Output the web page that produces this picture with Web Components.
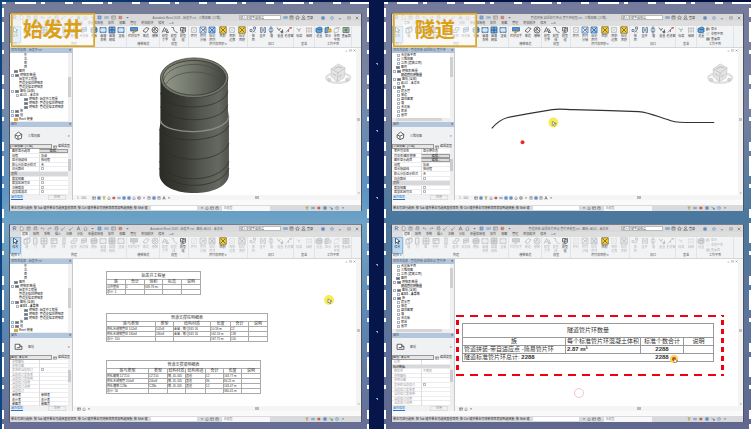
<!DOCTYPE html>
<html lang="zh-CN">
<head>
<meta charset="utf-8">
<title>始发井与隧道</title>
<style>
html,body{margin:0}
body{font-family:"Liberation Sans","Noto Sans CJK SC",sans-serif;font-size:3px;line-height:4px;color:#333;min-height:100vh;background:#06154a}
</style>
</head>
<body>
<star-desk>
  <dashed-panel tone="blue">
    <model-window doc="Autodesk Revit 2018 - 始发井.rvt - 三维视图: {三维}" kind="view" tree="shaft" props="shaft3d" label="始发井">
      <shaft-scene></shaft-scene>
    </model-window>
    <model-window doc="Autodesk Revit 2018 - 始发井.rvt - 图纸: A101 - 未命名" kind="sheet" tree="shaft" props="shaftSheet">
      <shaft-schedules></shaft-schedules>
    </model-window>
  </dashed-panel>
  <dashed-panel tone="navy">
    <model-window doc="管道拼装-自适应片环点-管片环模型.rvt - 三维视图: {三维}" kind="view" tree="tunnel" props="tunnel3d" label="隧道" compact>
      <tunnel-scene></tunnel-scene>
    </model-window>
    <model-window doc="管道拼装-自适应片环点-管片环模型.rvt - 图纸: A101 - 未命名" kind="sheet" tree="tunnel" props="tunnelSheet" compact>
      <tunnel-schedule></tunnel-schedule>
    </model-window>
  </dashed-panel>
</star-desk>
<script>
const reset = `*{box-sizing:border-box}button,input,select{font:inherit;color:inherit;margin:0;padding:0;border:0;background:none;border-radius:0;min-width:0;min-height:0;appearance:none;outline:0}svg{display:block}`;
const define = (name, css, html) => customElements.define(name, class extends HTMLElement {
  connectedCallback() {
    if (this.shadowRoot) return;
    const root = this.attachShadow({mode: 'open'});
    root.innerHTML = `<style>${reset}${css}</style>` + (typeof html === 'function' ? html(this) : html);
  }
});

/* 16-unit glyphs */
const S = (body, w = 8) => `<svg width="${w}" height="${w}" viewBox="0 0 16 16" fill="none" stroke="#555" stroke-width="1.6" aria-hidden="true">${body}</svg>`;
const G = {
  cursor:'<path d="M5 2v11l3-3 2 4 2-1-2-4h4z" fill="#fff" stroke="#345"/>',
  wall:'<path d="M2 5l6-3h6v8l-6 4H2z" fill="#e4e8ec"/><path d="M2 5h6v9M8 5l6-3"/>',
  door:'<path d="M5 2h7v12H5z" fill="#dde3e8"/><path d="M10 8v1"/>',
  window:'<path d="M2 2h12v12H2z" fill="#cddbe8"/><path d="M2 8h12M8 2v12"/>',
  column:'<path d="M5 2h6M6 2v12M10 2v12M5 14h6"/>',
  roof:'<path d="M2 8h5V3h7v5h-4v5H2z" fill="#d8e4ee" stroke="#678"/>',
  ceil:'<path d="M3 4l10-2v8L3 13z" fill="#9fc3e6" stroke="#4b7eb0"/><path d="M3 8l10-2"/>',
  floor:'<path d="M2 4l9-2 3 2v8l-9 2-3-2z" fill="#6fa8dc" stroke="#315f90"/><path d="M2 8l12-1"/>',
  curtain:'<path d="M2 3h12v10H2z" fill="#8cb9e2" stroke="#42719f"/><path d="M2 8h12M6 3v10M10 3v10" stroke="#fff"/>',
  mull:'<path d="M2 2h12v12H2z" fill="#77ace0" stroke="#315f90"/><path d="M8 2v12M2 8h12" stroke="#1d4f86"/>',
  rail:'<path d="M1 3h14v7H1z" fill="#4f93d2" stroke="#3a6c9c"/><path d="M5 14l5-6 2 2-5 4z" fill="#f0b34a" stroke="#b87a20"/>',
  ramp:'<path d="M2 10l6-7 6 2-6 8z" fill="#f2f2f2"/>',
  stair:'<circle cx="8" cy="8" r="6"/><path d="M3 6l7 7M5 3l8 8M4 11l7-8"/>',
  text:'<path d="M2 13L7 3l5 10M4 10h6M11 5l4 8h-5"/>',
  line:'<path d="M3 3h4c0 6 2 9 8 10"/>',
  group:'<path d="M3 3h7v7H3z"/><path d="M6 6l7-3v8l-5 3zM3 14h4"/>',
  roomoff:'<path d="M3 3h10v10H3z" stroke="#bbb"/><path d="M4 4l8 8M12 4l-8 8" stroke="#ccc"/>',
  room:'<path d="M2 2h12v12H2z" fill="#e5eef7" stroke="#3b77b8"/><path d="M3 3l10 10M13 3L3 13" stroke="#3b77b8"/><path d="M10 3l4 4-4 2z" fill="#e8762b" stroke="none"/>',
  tag:'<path d="M2 2h12v12H2z" fill="#b9d2ee" stroke="#316ba8"/><path d="M3 3l10 10M13 3L3 13" stroke="#28578c"/><path d="M9 9h5v5H9z" fill="#4a90d9" stroke="none"/>',
  area:'<path d="M1.500 1.500h13v13h-13z" fill="#f8cf32" stroke="#7c7045"/><path d="M3 3l10 10M13 3L3 13" stroke="#725d19"/>',
  shaft:'<path d="M9 2h4v4H9zM2 7h4v4H2zM7 13l6-6" stroke="#58708c"/><path d="M9 10l4 3" stroke="#c76"/>',
  open:'<path d="M3 3h3v10H3zM10 3h3v10h-3zM6 8h4" stroke="#5f7895"/>',
  vert:'<path d="M8 1l3 4H5zM8 15l3-4H5zM3 8h10" stroke="#54769c"/>',
  dorm:'<path d="M2 3l4 6 3-5M9 11h4V7"/><circle cx="12" cy="12" r="2" fill="#5b90c4"/>',
  level:'<path d="M2 13l5-6 6-4M7 7v5" stroke="#766"/><path d="M9 2h5v3H9z" fill="#e76b5d" stroke="none"/>',
  dot:'<path d="M3 5l5 3 4-3M8 8v4" stroke="#999"/>',
  grid:'<path d="M3 2v12M8 2v12M13 2v12M2 5h12M2 10h12" stroke="#bbb"/>',
  set:'<path d="M2 5l8-3 4 2v8l-8 2-4-2z" fill="#5ba3dc" stroke="#28679f"/><path d="M5 7h8"/>',
  show:'<path d="M2 4l7-2v10l-7 2z" fill="#69a6d9" stroke="#336a9c"/><path d="M8 6h6v6H8z" fill="#f4c554" stroke="#b18836"/>',
  ref:'<path d="M3 5h9l-3 8H2zM5 3h9" stroke="#bbb"/>',
  viewer:'<path d="M2 3h12v10H2z" fill="#b7c1b7" stroke="#667"/><path d="M5 5h6v6H5z" fill="#54954e" stroke="none"/>',
  doc:'<path d="M4 2h6l3 3v9H4z" fill="#eee"/>', save:'<path d="M3 3h10v10H3zM6 3v4h4V3"/>',
  undo:'<path d="M3 7h7c4 0 4 5 1 6M6 4L3 7l3 3"/>', redo:'<path d="M13 7H6c-4 0-4 5-1 6M10 4l3 3-3 3"/>',
  print:'<path d="M3 6h10v6H3zM5 6V2h6v4"/>', dim:'<path d="M2 13L13 3M2 9v4h4"/>', A:'<path d="M3 14L8 2l5 12M5 10h6" stroke-width="2.400"/>',
  house:'<path d="M2 8l6-5 6 5M4 8v6h8V8"/>', box:'<path d="M3 3h10v10H3z" fill="#6e9fd8" stroke="#27599a"/>',
  R:'<path d="M4 14V2h5c5 0 5 6 0 6H4M8 8l5 6" stroke="#27599a" stroke-width="2.600"/>',
  star:'<path d="M8 2l2 4 4 1-3 3 1 4-4-2-4 2 1-4-3-3 4-1z"/>', user:'<circle cx="8" cy="5" r="3"/><path d="M2 14c1-6 11-6 12 0z"/>',
  help:'<circle cx="8" cy="8" r="6" stroke="#467db8"/><path d="M6 6c1-3 5-1 2 2v1M8 11v1" stroke="#467db8"/>', x:'<path d="M3 3l10 10M13 3L3 13" stroke-width="2.200"/>',
  min:'<path d="M3 11h9" stroke-width="2.200"/>', max:'<path d="M3 3h10v9H3z"/>', caret:'<path d="M4 6h8l-4 5z" fill="#555" stroke="none"/>',
  red:'<path d="M3 4h9v8H3z" fill="#e06a50" stroke="#a43"/>', gold:'<path d="M3 3h10l-4 5v6H7V8z" fill="#eab53a" stroke="#8a9440"/>',
  link:'<path d="M2 5h5v6H2zM9 5h5v6H9zM5 8h6" stroke="#4a86bd"/>', sheet:'<path d="M2 3h12v10H2zM2 6h12M6 6v7" fill="#eee"/>'
};

define('star-desk', `:host{display:grid;grid-template-columns:1fr 1fr;grid-template-rows:minmax(0,1fr);gap:15px;padding:2px 0 0 2px;height:100vh;box-sizing:border-box;
 background:
 radial-gradient(circle,#6fa4d0 0 1px,transparent 1px) 4px 30px/83px 67px,
 radial-gradient(circle,#2d5596 0 1px,transparent 1px) 9px 12px/23px 43px,
 linear-gradient(90deg,#0f4680 0,#06154a 50%,#020f3f 100%)}`, '<slot></slot>');

define('dashed-panel', `:host{display:grid;grid-template-rows:minmax(0,1fr) minmax(0,1fr);gap:13px;padding:11px 7px 7px;min-width:0;min-height:0;box-sizing:border-box;
 --h:linear-gradient(90deg,#fff 0 8px,transparent 8px 17px,#fff 17px 38px,transparent 38px 43px,#fff 43px 47px,transparent 47px);
 --v:linear-gradient(#fff 0 9px,transparent 9px 14px,#fff 14px 34px,transparent 34px 42px,#fff 42px 46px,transparent 46px);
 --s:radial-gradient(circle,#b5cfe4 0 1px,transparent 1px)}
 :host([tone=blue]){background:var(--h) 63px 0/67px 2px repeat-x,var(--v) 0 6px/2px 67px repeat-y,var(--v) 100% 6px/2px 67px repeat-y,var(--s) 4px 5px/53px 71px,
 linear-gradient(180deg,#747b99 0,#7885a4 20%,#5b94c4 44%,#70a4c6 52%,#5c86b2 75%,#686d94 100%)}
 :host([tone=navy]){background:var(--h) 63px 0/67px 2px repeat-x,var(--v) 0 6px/2px 67px repeat-y,var(--v) 100% 6px/2px 67px repeat-y,var(--s) 4px 5px/53px 71px,
 linear-gradient(180deg,#747a9c 0,#7580a0 25%,#4b789e 50%,#5d749c 75%,#61678e 100%)}
 ::slotted(*){min-width:0;min-height:0}`, '<slot></slot>');

define('title-bar', `:host{display:flex;align-items:center;height:7px;background:#d9d9dc;white-space:nowrap;padding:0 2px}
 .q{display:flex;gap:1px;flex:0 0 122px;justify-content:space-between;padding-right:4px}
 .q svg{opacity:.75} .t{flex:1;text-align:center;color:#666}
 input{width:42px;height:5px;background:#fff;border:1px solid #bbb;color:#555;line-height:3px}
 .r{display:flex;gap:1px;align-items:center;padding-left:2px;flex:0 0 40px} .w{display:flex;justify-content:space-between;flex:0 0 38px}
 button{display:block;height:5px}`,
 el => `<div class="q">${['R','doc','save','print','undo','redo','print','dim','dim','A','house','caret','box','link','sheet','red','caret'].map(k=>S(G[k],5)).join('')}</div>
 <div class="t">${el.getAttribute('doc')}</div>
 <input aria-label="搜索" value="键入关键字或短语">
 <div class="r">${['link','save','star','user'].map(k=>S(G[k],5)).join('')}<span>登录</span></div>
 <div class="w">${['box','help','min','max','x'].map(k=>`<button aria-label="${k}">${S(G[k],4)}</button>`).join('')}</div>`);

define('tab-bar', `:host{display:flex;height:5px;background:#dededf;padding:0 11px;align-items:center;white-space:nowrap}
 nav{display:flex;gap:3px} button{height:5px;line-height:5px;padding:0 1px;color:#444} button:first-child{background:#f4f5f6}`,
 `<nav>${['建筑','结构','系统','插入','注释','分析','体量和场地','协作','视图','管理','附加模块','修改','▭▾'].map(t=>`<button>${t}</button>`).join('')}</nav>`);

const groups = [
 ['选择 ▾',11,[['cursor','修改',11,1]]],
 ['构建',107,[['wall','墙',10],['door','门',8],['window','窗',9],['sheet','构件',11],['column','柱',10],['roof','屋顶',10],['ceil','天花板',11],['floor','楼板',10],['curtain','幕墙<br>系统',9],['mull','幕墙<br>网格',9],['curtain','竖梃',10]]],
 ['楼梯坡道',33,[['rail','栏杆扶手',14],['ramp','坡道',10],['stair','楼梯',9]]],
 ['模型',28,[['text','模型<br>文字',9],['line','模型<br>线',9],['group','模型<br>组',10,1]]],
 ['房间和面积 ▾',60,[['roomoff','房间',10],['room','房间<br>分隔',9],['tag','标记<br>房间',10],['area','面积',11,1],['roomoff','面积<br>边界',9],['area','标记<br>面积',11]]],
 ['洞口',46,[['shaft','按<br>面',10],['open','竖井',9],['vert','墙',9],['dorm','垂直',9],['level','老虎窗',9]]],
 ['基准',20,[['dot','标高',10],['grid','轴网',10]]],
 ['工作平面',37,[['set','设置',9],['show','显示',9],['ref','参照<br>平面',9],['viewer','查看器',10]]]
];
define('tool-ribbon', `:host{display:flex;height:22px;background:#f2f3f5;border-bottom:1px solid #d3d5d8;padding-right:9px}
 section{display:grid;grid-template-rows:1fr 4px;border-right:1px solid #e2e3e5;min-width:0}
 .b{display:flex;min-width:0} h6{margin:0;font-weight:400;text-align:center;line-height:3px;white-space:nowrap;color:#555;font-size:3px}
 button{display:flex;flex-direction:column;align-items:center;line-height:4px;color:#444;white-space:nowrap}
 button.sel{background:#bcd9f2;outline:1px solid #8fb8de;outline-offset:-1px}
 :host([kind=sheet]) button:not(.on){opacity:.35;filter:grayscale(1)}
 .list{flex-direction:column;gap:1px;padding-top:1px} .list button{flex-direction:row;gap:1px}`,
 el => groups.map(([n,w,bs],gi)=>{
  const compact = el.hasAttribute('compact') && gi===7;
  const btn = ([k,t,bw,on],sz=8)=>`<button class="${on?'on':''} ${k==='cursor'?'sel':''}" style="flex:${sz===8?bw+' 0 0':'none'}">${S(G[k],sz)}<span>${t}</span></button>`;
  return `<section style="flex:${w} 0 0"><div class="b">${compact? btn(bs[0]).replace('9 0 0','0 0 9px')+`<div class="b list">${bs.slice(1).map(b=>btn([b[0],b[1].replace('<br>',''),0],4)).join('')}</div>`:bs.map(b=>btn(b)).join('')}</div><h6>${n}</h6></section>`;}).join(''));

const bar = t => `<div class="bar"><span>${t}</span><b>×</b></div>`;
const barCss = `.bar{display:flex;justify-content:space-between;height:5px;line-height:5px;background:#b4c6dc;color:#4e5e70;padding:0 1px;white-space:nowrap}.bar b{color:#222}`;
/* rows: [indent, marker, label, style] */
const trees = {
 shaft:[[14,'','东'],[14,'','北'],[14,'','南'],[14,'','西'],[4,'s','图例'],[1,'ms','明细表/数量'],[9,'','始发井工程量'],[9,'','管道支撑柱明细表'],[9,'','管道支撑梁明细表'],[1,'ms','图纸 (全部)'],[6,'m','A101 - 未命名','cur'],[14,'s','明细表: 始发井工程量'],[14,'s','明细表: 管道支撑柱明细表'],[14,'s','明细表: 管道支撑梁明细表'],[1,'ms','族'],[1,'ms','组'],[4,'g','Revit 链接']],
 tunnel:[[5,'m','天花板平面'],[5,'m','三维视图'],[5,'m','立面 (建筑立面)'],[4,'s','图例'],[1,'ms','明细表/数量'],[9,'','隧道管片环数量','hl'],[1,'ms','图纸 (全部)'],[5,'m','A101 - 未命名','cur'],[1,'ms','族'],[5,'m','喷水管'],[5,'m','坡道'],[5,'m','填充图案'],[5,'m','墙'],[5,'m','天花板'],[5,'m','家具'],[5,'m','屋顶']]
};
define('project-browser', `:host{display:block;background:#fff}${barCss}
 .in{display:grid;grid-template-columns:1fr 4px;height:68px} ul{list-style:none;margin:0;padding:0;color:#222}
 li{display:flex;gap:1px;height:4px;line-height:4px;white-space:nowrap;align-items:center}
 i{width:3px;height:3px;flex:none;border:1px solid #a9b3bd} i.s{background:#667;border-color:#8794a3;width:4px} i.g{background:#e0a73c;border-color:#e0a73c;width:4px}
 .hl span{background:#ddd} .bold.cur span{font-weight:700}
 .sb{background:#f1f1f1;padding-top:4px} .sb:before{content:"";display:block;width:3px;height:20px;background:#cfcfd2} .low .sb{padding-top:24px}
 .hs{height:3px;background:#eee;margin-top:-3px;padding:0 4px} .hs:before{content:"";display:block;width:46px;height:3px;background:#d5d5d7}`,
 el => { const k=el.getAttribute('tree'), sheet=el.getAttribute('kind')==='sheet';
 return bar('项目浏览器 - '+(k==='shaft'?'始发井.rvt':'管道拼装-自适应点-管片环'))+`<div class="in ${k==='shaft'?'low':''}"><ul>${trees[k].map(([p,m,t,c])=>`<li class="${c||''} ${sheet?'bold':''}" style="padding-left:${p}px">${[...m].map(x=>`<i class="${x}"></i>`).join('')}<span>${t}</span></li>`).join('')}</ul><div class="sb"></div></div>${k==='tunnel'?'<div class="hs"></div>':''}`;});

const E='[e]',C='[c]';
const propData = {
 shaft3d:{rows:[['图形显示选项',E],['规程','协调'],['显示隐藏线','按规程'],['默认分析显示样式','无'],['日光路径',C],['范围'],['裁剪视图',C],['裁剪区域可见',C],['注释裁剪',C],['远剪裁激活',C]]},
 tunnel3d:{rows:[['零件可见性','显示原状态'],['可见性/图形替换',E],['图形显示选项',E],['规程','协调'],['显示隐藏线','按规程'],['默认分析显示样式','无'],['日光路径',C],['范围'],['裁剪视图',C],['裁剪区域可见',C]]},
 shaftSheet:{grey:8,rows:[['参照图纸',''],['参照详图',''],['发布的当前修订',C],['当前修订发布者',''],['当前修订发布到',''],['当前修订日期',''],['当前修订说明',''],['当前修订',''],['审核者','审核者'],['设计者','设计者'],['审图员','审图员']]},
 tunnelSheet:{grey:99,rows:[['比例',''],['标识数据'],['相关性','不相关'],['参照图纸',''],['参照详图',''],['发布的当前修订',C],['当前修订发布者',''],['当前修订发布到',''],['当前修订日期',''],['当前修订说明','']]}
};
define('property-palette', `:host{display:flex;flex-direction:column;background:#f0f1f2;min-height:0}${barCss}.bar{flex:none}
 .type{display:flex;align-items:center;gap:5px;padding:0 2px 0 4px;height:17px;flex:none;color:#555} .type span{flex:1}
 .pick{display:flex;height:5px;gap:1px;flex:none;line-height:5px;white-space:nowrap;align-items:center} select{flex:0 0 42px;height:5px;line-height:3px;border:1px solid #999;background:#e6e6e6;color:#222}
 .scroll{display:grid;grid-template-columns:1fr 4px;grid-template-rows:minmax(0,1fr);flex:1;min-height:0} .sb{background:#eee;padding-top:10px} .sb:before{content:"";display:block;width:3px;height:12px;background:#cbcbcf}
 .rows{display:grid;grid-auto-rows:minmax(0,1fr);background:#fff;min-height:0}
 .row{display:grid;grid-template-columns:27px 1fr;box-shadow:inset 0 -1px #ececee;line-height:4px;white-space:nowrap;color:#222;min-height:0;padding-left:2px}
 .row>:last-child{border-left:1px solid #ddd;padding-left:1px}
 .row.cat{background:#d7d8da;display:block;padding-left:1px} .row.grey{color:#999}
 .row button{background:#ddd;border:1px solid #999;line-height:2px;height:4px;text-align:center}
 input{width:3px;height:3px;border:1px solid #bbb;display:block}
 .foot{display:flex;justify-content:space-between;height:5px;flex:none;padding:0 6px 0 1px;line-height:5px} a{color:#2471c8} .foot button{color:#999;border:1px solid #ddd;width:18px;height:5px;line-height:3px}`,
 el => {const k=el.getAttribute('props'),d=propData[k],sheet=k.endsWith('Sheet');
 return bar('属性')+`<div class="type">${sheet?S('<path d="M2 4h8l4 4v5H2z" fill="#fff"/><path d="M10 4v4h4M5 10h6"/>',9):S('<path d="M2 7l6-5 6 4-1 7-6 2-5-3z" fill="#fff"/><path d="M2 7l5 2 7-3M7 9v6"/>',9)}<span>${sheet?'图纸':'三维视图'}</span>▾</div>
 <div class="pick"><select aria-label="类型"><option>${sheet?'图纸: 未命名':'三维视图: {三维}'}</option></select>${S(G.sheet,4)}<span>编辑类型</span></div>
 <div class="scroll"><div class="rows">${d.rows.map((r,i)=>r.length<2?`<div class="row cat">${r[0]}</div>`:`<div class="row ${i<(d.grey||0)?'grey':''}"><label for="p${i}">${r[0]}</label>${r[1]===E?`<button id="p${i}">编辑...</button>`:r[1]===C?`<div><input id="p${i}" type="checkbox"></div>`:`<output id="p${i}">${r[1]}</output>`}</div>`).join('')}</div><div class="sb"></div></div>
 <div class="foot"><a href="#help">属性帮助</a><button>应用</button></div>`;});

define('view-bar', `:host{display:flex;align-items:center;height:5px;background:#f5f5f6;padding:0 4px;gap:2px;color:#777} .v{flex:0 0 176px;display:flex;gap:1px;align-items:center}.v span{margin-right:5px;white-space:nowrap}.th{width:4px;height:3px;background:#bbb}`,
 el => `<div class="v">${el.getAttribute('kind')==='view'?'<span>1 : 100</span>'+['sheet','box','gold','house','red','link','box','box','house','stair','caret','save','box','save','A','caret'].map(k=>S(G[k],4)).join(''):['sheet','house','caret'].map(k=>S(G[k],4)).join('')}</div><div class="th"></div>`);

define('status-bar', `:host{display:flex;align-items:center;height:6px;background:#d9dadb;white-space:nowrap;color:#222;gap:3px}
 p{margin:0;flex:0 0 136px;padding-left:1px;line-height:6px} .f{flex:0 0 46px;height:4px;background:#fff} select{flex:0 0 48px;height:5px;line-height:5px;background:#f8f8f8;color:#888;padding-left:2px}
 .i{display:flex;gap:1px} .e{margin-left:auto;gap:2px;margin-right:16px}`,
 `<p>单击可进行选择; 按 Tab 键并单击可选择其他项目; 按 Ctrl 键并单击可将新项目添加到选择集; 按 Shift 键</p><div class="f"></div><div class="i">${['caret','house','sheet','save'].map(k=>S(G[k],4)).join('')}</div>
 <select aria-label="设计选项"><option>主模型</option></select><div class="i e">${['gold','link','red','box','dorm','help','caret'].map(k=>S(G[k],4)).join('')}</div>`);

define('name-badge', `:host{display:grid;place-items:center;height:34px;border:1px solid #dca51f;outline:1px solid #e6bd57;outline-offset:-2px;background:rgba(255,255,255,.6);color:#dba013;font-size:20px;line-height:30px;font-weight:700;box-sizing:border-box}`,'<slot></slot>');

define('model-window', `:host{display:flex;flex-direction:column;position:relative;background:#fafafa;border-left:1px solid #4e5460;border-right:1px solid #4e5460;border-top:1px solid #777d8b;min-width:0;box-sizing:border-box}
 .main{flex:1;display:grid;grid-template-columns:63px 1fr;grid-template-rows:minmax(0,1fr);min-height:0}
 .side{display:flex;flex-direction:column;gap:1px;border-right:1px solid #c5c9ce;min-height:0;background:#eee} project-browser{flex:none} property-palette{flex:1}
 .view{display:grid;grid-template-rows:minmax(0,1fr) 5px;min-width:0;min-height:0} .canvas{display:grid;grid-template-columns:1fr 5px;grid-template-rows:minmax(0,1fr);background:#fff;min-height:0}
 .vs{background:#f4f4f5;display:flex;flex-direction:column;justify-content:space-between;align-items:center;color:#888} .vs i{width:3px;height:3px;background:#c3c3c6}
 .ctl{position:absolute;right:5px;top:35px;display:flex;gap:1px} .gap{height:5px;background:#fafafa;flex:none} status-bar,title-bar,tab-bar,tool-ribbon{flex:none}
 name-badge{position:absolute;left:1px;top:-1px;width:84px}`,
 el => {const a=n=>el.getAttribute(n)||'',k=a('kind'),c=el.hasAttribute('compact')?'compact':'';
 return `<title-bar doc="${a('doc')}"></title-bar><tab-bar></tab-bar><tool-ribbon kind="${k}" ${c}></tool-ribbon>
 <div class="main"><div class="side"><project-browser tree="${a('tree')}" kind="${k}"></project-browser><property-palette props="${a('props')}"></property-palette></div>
 <div class="view"><div class="canvas"><slot></slot><div class="vs"><span></span><i></i><span>▾</span></div></div><view-bar kind="${k}"></view-bar></div></div>
 <div class="gap"></div><status-bar></status-bar><div class="ctl">${['min','max','x'].map(k=>`<button aria-label="视图 ${k}">${S(G[k],3)}</button>`).join('')}</div>${a('label')?`<name-badge>${a('label')}</name-badge>`:''}`;});

const sceneCss = `:host{display:block;min-width:0;min-height:0}svg{width:100%;height:100%}`;
const cube = `<g transform="translate(267 26)"><ellipse cy="4" rx="12" ry="5" fill="none" stroke="#e2e2e2" stroke-width="2.500"/><path d="M-7-5L0-10 7-6 6 4-1 8-7 3z" fill="#e2e3e5" stroke="#bbb" stroke-width=".5"/><path d="M-7-5L0-1 7-6M0-1L-1 8" fill="none" stroke="#aaa" stroke-width=".5"/><path d="M-4-5L0-7 4-6M-5 0l3 2M1 3l3-2" fill="none" stroke="#bbb"/><circle cx="-9" cy="6" r="1.500" fill="#ddd" stroke="#aaa" stroke-width=".5"/><circle cx="9" cy="6" r="1.500" fill="#ddd" stroke="#aaa" stroke-width=".5"/></g>`;
define('shaft-scene', sceneCss, `<svg viewBox="0 0 283 148" preserveAspectRatio="xMinYMin meet" role="img" aria-label="始发井三维模型">
 <defs><linearGradient id="o"><stop offset="0" stop-color="#2b2c27"/><stop offset=".35" stop-color="#3b3d36"/><stop offset=".6" stop-color="#54574e"/><stop offset=".85" stop-color="#656860"/><stop offset="1" stop-color="#50534a"/></linearGradient>
 <linearGradient id="n"><stop offset="0" stop-color="#929788"/><stop offset=".4" stop-color="#777c70"/><stop offset="1" stop-color="#42453d"/></linearGradient></defs>
 <path d="M88 31V75L87 82V128C90 152 154 152 157 128V70L156 63V31z" fill="url(#o)"/>
 <ellipse cx="122" cy="30" rx="34" ry="20" fill="#73776c" stroke="#30322d" stroke-width=".7"/>
 <ellipse cx="122" cy="30" rx="31.500" ry="17.500" fill="url(#n)" stroke="#34362f" stroke-width=".8"/>
 <path d="M91 33C96 11 148 11 153 33M93 37C102 20 143 20 151 37" fill="none" stroke="#484b43" stroke-width=".7"/>
 <path d="M88 73C92 89 154 88 157 69" fill="none" stroke="#8b8f83" stroke-width="1.300"/>
 <g fill="none" stroke="#2b2d28" stroke-width=".7"><path d="M88 45C93 65 152 64 156 43M88 59C95 77 151 77 156 57M87 82C95 97 149 96 157 78M87 96C95 118 149 117 157 96M87 114C95 138 149 137 157 114M87 121C95 144 149 144 157 121"/></g>
 ${cube}</svg>`);
const pointer = (x,y,r=5)=>`<g transform="translate(${x} ${y})"><circle r="${r}" fill="#f5ec57"/><path d="M-1-1v4l1-1 1 2 1-1-1-2h2z" fill="#fff" stroke="#665" stroke-width=".6"/></g>`;
define('tunnel-scene', sceneCss, `<svg viewBox="0 0 283 148" preserveAspectRatio="xMinYMin meet" role="img" aria-label="隧道三维路径">
 <path d="M37 81C42 75 46 72 53 70L74 66 98 62C105 61 112 62 119 62L156 63 185 64C196 65 204 69 214 72 220 75 225 75 232 75L261 75" fill="none" stroke="#333" stroke-width="1.200"/>
 ${pointer(99,75)}<circle cx="68" cy="95" r="2" fill="#ee2a2a"/>${cube}</svg>`);

const table = (title, cols, head, rows) => `<table><colgroup>${cols.map(c=>`<col style="width:${c}px">`).join('')}</colgroup><thead><tr class="t"><th colspan="${cols.length}">${title}</th></tr><tr>${head.map(h=>`<th>${h}</th>`).join('')}</tr></thead><tbody>${rows.map(r=>`<tr>${r.map(c=>`<td>${c}</td>`).join('')}</tr>`).join('')}</tbody></table>`;
define('shaft-schedules', `:host{display:flex;flex-direction:column;align-items:flex-start;gap:18px;padding:12px 0 0 33px;font-size:4px;position:relative;min-height:0;box-sizing:border-box}
 table{border-collapse:collapse;table-layout:fixed;width:min-content;color:#333} th,td{border:1px solid #aaa;padding:0;font-weight:400;height:5px;line-height:4px;white-space:nowrap;text-align:left} th{text-align:center} td{font-size:3px} .t th{height:8px;line-height:7px}
 .m{position:absolute;left:251px;top:36px}`,
 table('始发井工程量',[19,19,18,19,19],['族','合计','体积','标高','说明'],[['沉井壁体','1','949.78 m³','',''],['总计: 1','','','','']])+
 table('管道支撑柱明细表',[49,18,37,20,18,19],['族与类型','类型','结构材质','长度','合计','说明'],[['热轧无缝钢管柱 102x8','102x8','金属 - 钢 Q345 16','10.59 m','12',''],['热轧无缝钢管柱 180x8','180x8','金属 - 钢 Q345 16','162.16 m','138',''],['总计: 150','','','167.75 m','150','']])+
 table('管道支撑梁明细表',[42,19,18,20,18,18,19],['族与类型','类型','结构材质','结构用途','合计','长度','说明'],[['热轧扁钢 12*210','12*210','钢, 45-345','其他','12','163.77 m',''],['热轧无缝钢管 200x8','200x8','钢, 45-345','其他','36','84.21 m',''],['热轧槽钢 C28b','C28b','钢, 45-345','其他','12','163.47 m',''],['总计: 56','','','','','360.41 m','']])+
 `<svg class="m" width="10" height="10" viewBox="-5 -5 10 10" aria-hidden="true">${pointer(0,0)}</svg>`);

define('tunnel-schedule', `:host{display:block;padding:56px 14px 0 1px;font-size:6px;position:relative;min-width:0;min-height:0;box-sizing:border-box}
 .box{--h:linear-gradient(90deg,#f00011 0 8px,transparent 8px);--v:linear-gradient(#f00011 0 5px,transparent 5px);padding:8px 10px 14px 6px;background:var(--h) 0 0/14px 2px repeat-x,var(--h) 0 100%/14px 2px repeat-x,var(--v) 0 5px/3px 9px repeat-y,var(--v) 100% 5px/3px 9px repeat-y}
 table{border-collapse:collapse;table-layout:fixed;width:100%;color:#333} th,td{border:1px solid #999;padding:0 1px;font-weight:400;height:8px;line-height:7px;white-space:nowrap;text-align:left} th{padding:0} th,.c{text-align:center} .t th{height:14px}
 b{font-weight:700} .l{border-right:0} .r{border-left:0}
 .m{position:absolute;left:214px;top:95px}.ring{position:absolute;left:119px;top:129px;width:10px;height:10px;border:1px solid #f6c2c8;border-radius:50%}`,
 `<div class="box"><table><colgroup><col style="width:41%"><col style="width:30%"><col style="width:17%"><col></colgroup><thead><tr class="t"><th colspan="4">隧道管片环数量</th></tr><tr><th>族</th><th>每个标准管片环混凝土体积</th><th>标准个数合计</th><th>说明</th></tr></thead>
 <tbody><tr><td>管道拼装-带自适应点 -简易管片环</td><td><b>2.87 m³</b></td><td class="c"><b>2288</b></td><td></td></tr><tr><td colspan="2" class="l">隧道标准管片环总计: <b>2288</b></td><td class="c l r"><b>2288</b></td><td class="r"></td></tr></tbody></table></div>
 <svg class="m" width="10" height="10" viewBox="-5 -5 10 10" aria-hidden="true"><circle r="4" fill="#f7d64b"/><circle r="2" fill="#e83a24"/><path d="M0 0v4l1-1 1 1 1-1-1-1h2z" fill="#fff" stroke="#665" stroke-width=".5"/></svg><span class="ring"></span>`);
</script>
</body>
</html>
